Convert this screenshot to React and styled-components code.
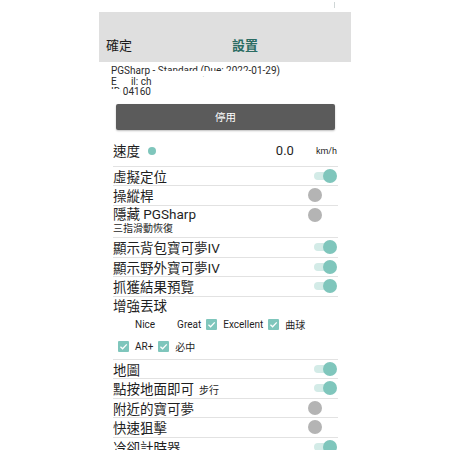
import React from 'react';
import styled, { createGlobalStyle } from 'styled-components';

const teal = '#7fc6bc';
const tealTrack = '#d3ebe7';
const offGray = '#b4b4b4';
const lineGray = '#e2e2e2';

const GlobalStyle = createGlobalStyle`
  body {
    margin: 0;
    background: #ffffff;
    font-family: Roboto, "Noto Sans CJK TC", sans-serif;
    color: #1f1f1f;
  }
`;

const Page = styled.div`
  width: 450px;
  height: 450px;
  overflow: hidden;
  background: #ffffff;
`;

const StatusStrip = styled.div`
  height: 12px;
  display: flex;
  justify-content: flex-end;
  padding-right: 115px;
`;

const StatusTick = styled.div`
  width: 1px;
  height: 6px;
  margin-top: 2px;
  background: #cfd6d6;
`;

const Panel = styled.div`
  width: 252px;
  margin-left: 99px;
`;

const Header = styled.div`
  height: 50px;
  background: #dfdfdf;
  display: flex;
  align-items: center;
  padding: 14px 0 0 7px;
  box-sizing: border-box;
  font-size: 13px;
`;

const HeaderAction = styled.div`
  color: #1c1c1c;
`;

const HeaderTitle = styled.div`
  margin-left: 100px;
  font-weight: 700;
  color: #2b6c63;
`;

const Body = styled.div`
  padding: 0 13px 0 14px;
`;

const Info = styled.div`
  padding-top: 4px;
  margin-left: -2px;
  font-size: 10px;
  line-height: 10.5px;
  color: #2a2a2a;
`;

const InfoLine = styled.div`
  white-space: nowrap;
`;

const Masked = styled.span`
  position: relative;
  &::after {
    content: '';
    position: absolute;
    left: 0;
    right: 0;
    top: ${(p) => p.$from || '45%'};
    bottom: 0;
    background: #ffffff;
  }
`;

const Hidden = styled.span`
  color: transparent;
`;

const StopButton = styled.button`
  display: block;
  width: 219px;
  height: 26px;
  margin: 6px 0 0 3px;
  border: none;
  border-radius: 2px;
  background: #5b5b5b;
  color: #ffffff;
  font-family: inherit;
  font-size: 10.5px;
  box-shadow: 0 1px 2px rgba(0, 0, 0, 0.25);
`;

const Row = styled.div`
  display: flex;
  align-items: center;
  height: ${(p) => p.$h || '18.5px'};
  border-bottom: 1px solid ${lineGray};
  font-size: 13.5px;
`;

const SpeedRow = styled(Row)`
  height: 31px;
  padding-top: 5px;
`;

const Label = styled.div`
  flex: 1;
  white-space: nowrap;
`;

const Dot = styled.span`
  display: inline-block;
  width: 8px;
  height: 8px;
  border-radius: 50%;
  background: ${teal};
  margin-left: 8px;
  vertical-align: 1px;
`;

const SpeedValue = styled.div`
  font-size: 13px;
  margin-right: 22px;
`;

const Unit = styled.div`
  font-size: 9px;
  margin-right: 1px;
  padding-top: 2px;
`;

const Stack = styled.div`
  flex: 1;
  display: flex;
  flex-direction: column;
  line-height: 15px;
`;

const SubText = styled.div`
  font-size: 10px;
  line-height: 13px;
`;

const Small = styled.span`
  font-size: 10px;
  margin-left: 5px;
`;

const SwitchTrack = styled.div`
  position: relative;
  width: 29px;
  height: 14px;
  margin-right: 1px;
  align-self: ${(p) => (p.$top ? 'flex-start' : 'center')};
  margin-top: ${(p) => (p.$top ? '2px' : '0')};
  &::before {
    content: '';
    position: absolute;
    left: 6px;
    right: 2px;
    top: 3px;
    height: 8px;
    border-radius: 4px;
    background: ${(p) => (p.$on ? tealTrack : 'transparent')};
  }
  &::after {
    content: '';
    position: absolute;
    top: 0;
    left: ${(p) => (p.$on ? '15px' : '0')};
    width: 14px;
    height: 14px;
    border-radius: 50%;
    background: ${(p) => (p.$on ? teal : offGray)};
  }
`;

const Section = styled.div`
  border-bottom: 1px solid ${lineGray};
  padding-bottom: 1px;
`;

const SectionTitle = styled.div`
  height: 17px;
  display: flex;
  align-items: center;
  font-size: 13.5px;
`;

const CheckRow = styled.div`
  display: flex;
  align-items: center;
  height: ${(p) => p.$h};
  padding-left: 5px;
  font-size: 10px;
`;

const Box = styled.span`
  width: 11px;
  height: 11px;
  border-radius: 1px;
  margin-right: 6px;
  display: inline-flex;
  align-items: center;
  justify-content: center;
  background: ${(p) => (p.$checked ? teal : 'transparent')};
`;

const CheckText = styled.span`
  margin-right: 5px;
`;

function Switch({ on, top }) {
  return <SwitchTrack $on={on} $top={top} />;
}

function Check({ checked, label }) {
  return (
    <>
      <Box $checked={checked}>
        {checked && (
          <svg width="9" height="9" viewBox="0 0 10 10">
            <path d="M1.6 5.2 L4 7.5 L8.6 2.6" fill="none" stroke="#ffffff" strokeWidth="1.4" />
          </svg>
        )}
      </Box>
      <CheckText>{label}</CheckText>
    </>
  );
}

function ToggleRow({ label, on }) {
  return (
    <Row>
      <Label>{label}</Label>
      <Switch on={on} />
    </Row>
  );
}

export default function App() {
  return (
    <Page>
      <GlobalStyle />
      <StatusStrip>
        <StatusTick />
      </StatusStrip>
      <Panel>
        <Header>
          <HeaderAction>確定</HeaderAction>
          <HeaderTitle>設置</HeaderTitle>
        </Header>
        <Body>
          <Info>
            <InfoLine>
              PGSharp - <Masked $from="55%">Standard (Due: 2022</Masked>-01-29)
            </InfoLine>
            <InfoLine>
              E<Hidden>ma</Hidden>il: ch
            </InfoLine>
            <InfoLine>
              <Masked $from="30%">ID</Masked> 04160<Masked $from="60%">.</Masked>
            </InfoLine>
          </Info>
          <StopButton>停用</StopButton>
          <SpeedRow>
            <Label>
              速度<Dot />
            </Label>
            <SpeedValue>0.0</SpeedValue>
            <Unit>km/h</Unit>
          </SpeedRow>
          <ToggleRow label="虛擬定位" on />
          <ToggleRow label="操縱桿" />
          <Row $h="31.5px">
            <Stack>
              <div>隱藏 PGSharp</div>
              <SubText>三指滑動恢復</SubText>
            </Stack>
            <Switch top />
          </Row>
          <ToggleRow label="顯示背包寶可夢IV" on />
          <ToggleRow label="顯示野外寶可夢IV" on />
          <ToggleRow label="抓獲結果預覽" on />
          <Section>
            <SectionTitle>增強丟球</SectionTitle>
            <CheckRow $h="22px">
              <Check label="Nice" />
              <Check label="Great" />
              <Check checked label="Excellent" />
              <Check checked label="曲球" />
            </CheckRow>
            <CheckRow $h="22px">
              <Check checked label="AR+" />
              <Check checked label="必中" />
            </CheckRow>
          </Section>
          <ToggleRow label="地圖" on />
          <Row>
            <Label>
              點按地面即可<Small>步行</Small>
            </Label>
            <Switch on />
          </Row>
          <ToggleRow label="附近的寶可夢" />
          <ToggleRow label="快速狙擊" />
          <ToggleRow label="冷卻計時器" on />
        </Body>
      </Panel>
    </Page>
  );
}
